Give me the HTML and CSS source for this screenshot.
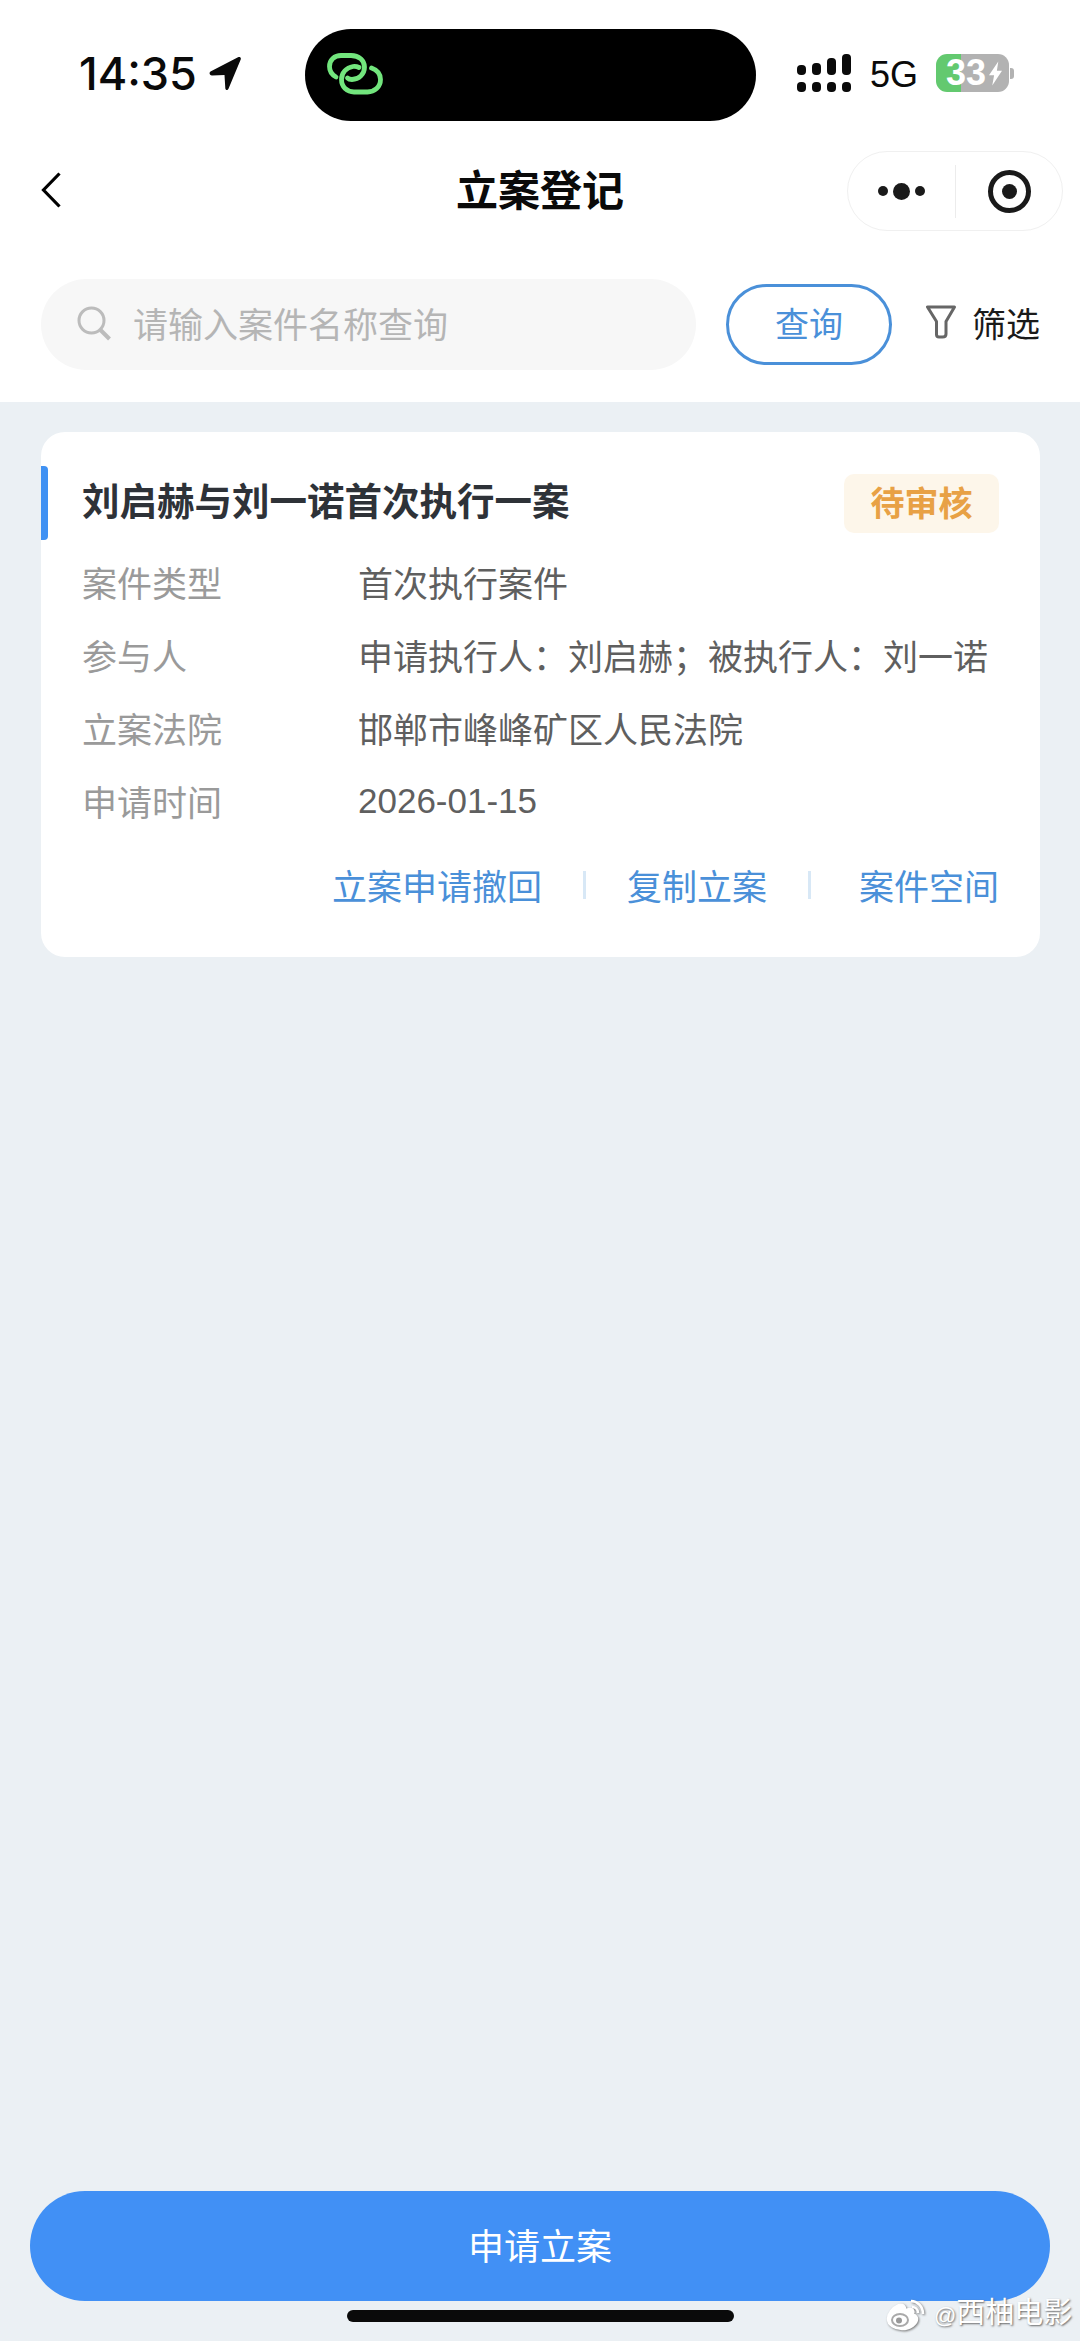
FILE: index.html
```html
<!DOCTYPE html>
<html lang="zh-CN">
<head>
    <meta charset="UTF-8">
    <meta name="viewport" content="width=device-width, initial-scale=1.0">
    <title>立案登记</title>
    <link rel="stylesheet" href="styles.css">
</head>
<body>
    <div class="page">
        <header class="top">
            <div class="status-bar">
                <div class="status-left">
                    <span class="clock">14:35</span>
                    <svg class="location" viewBox="0 0 34 35"><path d="M1.500 15.500 29 1.300c2-1 3.500.5 2.600 2.500L19.500 32.700c-1 2-3 1.500-3.200-.5L15.500 19 3 19.500c-2.500 0-3.200-2.800-1.500-4z"/></svg>
                </div>
                <div class="island">
                    <svg class="island-logo" viewBox="0 0 56 42" fill="none" stroke="#72e57d" stroke-width="4.800" stroke-linecap="round">
                        <path d="M9 24C4.500 21.500 2.500 17 2.500 13.500 2.500 7 7.500 2.500 14 2.500h10c8 0 13.500 5 13.500 11.500 0 7-5.500 12.500-12.500 12.500-2 0-3.500-.5-4.500-1.500"/>
                        <path d="M44.500 15c5.500 2 9 6 9 11.500 0 7.500-6 12.500-13 12.500H27c-7 0-12.500-5-12.500-12.500 0-7 5-12 11.500-13 2-.3 4 0 6 1"/>
                    </svg>
                </div>
                <div class="status-right">
                    <div class="signal">
                        <div class="signal-col"><span class="bar b1"></span><span class="bar-dot"></span></div>
                        <div class="signal-col"><span class="bar b2"></span><span class="bar-dot"></span></div>
                        <div class="signal-col"><span class="bar b3"></span><span class="bar-dot"></span></div>
                        <div class="signal-col"><span class="bar b4"></span><span class="bar-dot"></span></div>
                    </div>
                    <span class="network">5G</span>
                    <div class="battery">
                        <div class="battery-body"><span class="battery-text">33</span><svg class="bolt" viewBox="0 0 14 26"><path d="M10 0 0 15h5.500L3.500 26 14 10H8.500z"/></svg></div>
                        <span class="battery-nub"></span>
                    </div>
                </div>
            </div>

            <nav class="nav-bar">
                <svg class="back" viewBox="0 0 20 36" fill="none" stroke="#000" stroke-width="3.200"><path d="M18.500 1.500 2.500 18l16 16.500"/></svg>
                <h1 class="nav-title">立案登记</h1>
                <div class="capsule">
                    <div class="capsule-dots">
                        <span class="dot"></span>
                        <span class="dot big"></span>
                        <span class="dot"></span>
                    </div>
                    <span class="capsule-line"></span>
                    <div class="capsule-record"><span></span></div>
                </div>
            </nav>

            <div class="search-row">
                <div class="search-box">
                    <svg class="search-icon" viewBox="0 0 34 35" fill="none" stroke="#bcbcbc" stroke-width="3"><circle cx="14.500" cy="14.500" r="12.500"/><path d="m23.500 24 9 9" stroke-width="4"/></svg>
                    <span class="placeholder">请输入案件名称查询</span>
                </div>
                <button class="query-btn">查询</button>
                <div class="filter">
                    <svg class="filter-icon" viewBox="0 0 30 34" fill="none" stroke="#666" stroke-width="3" stroke-linejoin="round"><path d="M1.500 2h27L20 16.500V29c0 2-1.500 3-3.500 3H13c-1.500 0-2.500-1-2.500-2.500V16.500z"/></svg>
                    <span class="filter-text">筛选</span>
                </div>
            </div>
        </header>

        <main class="list">
            <section class="case-card">
                <div class="case-head">
                    <h2 class="case-title">刘启赫与刘一诺首次执行一案</h2>
                    <span class="case-status">待审核</span>
                </div>
                <div class="case-row"><span class="case-label">案件类型</span><span class="case-value">首次执行案件</span></div>
                <div class="case-row"><span class="case-label">参与人</span><span class="case-value">申请执行人：刘启赫；被执行人：刘一诺</span></div>
                <div class="case-row"><span class="case-label">立案法院</span><span class="case-value">邯郸市峰峰矿区人民法院</span></div>
                <div class="case-row"><span class="case-label">申请时间</span><span class="case-value">2026-01-15</span></div>
                <div class="case-actions">
                    <a>立案申请撤回</a>
                    <span class="action-line"></span>
                    <a>复制立案</a>
                    <span class="action-line"></span>
                    <a class="last">案件空间</a>
                </div>
            </section>
        </main>

        <footer class="bottom">
            <button class="apply-btn">申请立案</button>
            <div class="home-bar"></div>
        </footer>

        <div class="watermark">
            <svg class="weibo" viewBox="0 0 42 32" fill="none" stroke="#fff" stroke-width="2.500"><path fill="#fff" d="M14 6C7 9 3 15 3 20c0 6 7 10 14 10 8 0 15-5 15-10 0-3-2-4-4-5 1-3 0-5-3-5-2 0-4 1-5 1 .5-4-2-6-6-5z"/><ellipse cx="15" cy="21" rx="8" ry="6" stroke="#aaa" stroke-width="2"/><circle cx="14" cy="21.500" r="3" fill="#999" stroke="none"/><path d="M26 2c6 0 12 5 12 13M27 8c3 0 6 2 6 6"/></svg>
            <span class="watermark-text"><span class="at">@</span>西柚电影</span>
        </div>
    </div>
</body>
</html>
```

FILE: styles.css
```css
* {
    box-sizing: border-box;
}
html, body {
    margin: 0;
    padding: 0;
}
body {
    font-family: "Liberation Sans", "Noto Sans CJK SC", sans-serif;
    background-color: #ebf0f4;
}
h1, h2 {
    margin: 0;
}
button {
    font-family: inherit;
    cursor: pointer;
}

.page {
    position: relative;
    width: 1080px;
    height: 2341px;
    display: flex;
    flex-direction: column;
    overflow: hidden;
}

/* top white area */
.top {
    height: 402px;
    background: #fff;
    display: flex;
    flex-direction: column;
}
.status-bar {
    height: 121px;
    padding-top: 29px;
    display: flex;
    align-items: flex-start;
}
.status-left {
    width: 305px;
    height: 92px;
    padding: 0 0 3px 79px;
    display: flex;
    align-items: center;
    gap: 12px;
}
.clock {
    font-family: Inter, sans-serif;
    font-size: 45px;
    font-weight: 550;
    color: #0a0a0a;
}
.location {
    width: 34px;
    height: 35px;
    fill: #0a0a0a;
}
.island {
    width: 451px;
    height: 92px;
    background: #000;
    border-radius: 46px;
    padding-left: 22px;
    display: flex;
    align-items: center;
}
.island-logo {
    width: 56px;
    height: 42px;
    margin-bottom: 2px;
}
.status-right {
    flex: 1;
    height: 92px;
    padding-left: 41px;
    display: flex;
    align-items: center;
}
.signal {
    display: flex;
    gap: 6px;
    height: 38px;
    margin-top: -4px;
}
.signal-col {
    width: 9px;
    height: 38px;
    display: flex;
    flex-direction: column;
    justify-content: flex-end;
    gap: 7px;
}
.bar {
    display: block;
    background: #0a0a0a;
    border-radius: 4px;
}
.bar-dot {
    display: block;
    height: 10px;
    background: #0a0a0a;
    border-radius: 4px;
}
.b1 {
    height: 10px;
}
.b2 {
    height: 12px;
}
.b3 {
    height: 17px;
}
.b4 {
    height: 21px;
}
.network {
    margin-left: 19px;
    font-size: 36px;
    color: #0a0a0a;
    line-height: 1;
}
.battery {
    margin: -4px 0 0 18px;
    display: flex;
    align-items: center;
}
.battery-body {
    width: 73px;
    height: 38px;
    border-radius: 11px;
    background: linear-gradient(to right, #63c96f 0, #63c96f 34%, #b2b2b2 34%);
    display: flex;
    align-items: center;
    padding-left: 10px;
    gap: 3px;
}
.battery-text {
    font-size: 36px;
    font-weight: 700;
    color: #fff;
    line-height: 1;
}
.bolt {
    width: 13px;
    height: 25px;
    fill: #fff;
}
.battery-nub {
    width: 4px;
    height: 11px;
    margin-left: 1px;
    background: #b2b2b2;
    border-radius: 0 3px 3px 0;
}

.nav-bar {
    height: 110px;
    padding: 30px 17px 0;
    display: grid;
    grid-template-columns: 1fr auto 1fr;
    align-items: center;
}
.back {
    width: 20px;
    height: 36px;
    margin: 0 0 2px 24px;
}
.nav-title {
    font-size: 42px;
    font-weight: 700;
    color: #0a0a0a;
    padding-bottom: 7px;
}
.capsule {
    width: 216px;
    height: 80px;
    justify-self: end;
    border: 1px solid #f0f0f0;
    border-radius: 40px;
    display: flex;
    align-items: center;
}
.capsule-dots {
    width: 107px;
    display: flex;
    justify-content: center;
    align-items: center;
    gap: 5px;
}
.dot {
    width: 10px;
    height: 10px;
    border-radius: 50%;
    background: #1a1a1a;
}
.dot.big {
    width: 17px;
    height: 17px;
}
.capsule-line {
    width: 1px;
    height: 53px;
    background: #ececec;
}
.capsule-record {
    flex: 1;
    display: flex;
    justify-content: center;
}
.capsule-record span {
    width: 43px;
    height: 43px;
    border: 5px solid #1a1a1a;
    border-radius: 50%;
    display: flex;
    align-items: center;
    justify-content: center;
}
.capsule-record span::after {
    content: "";
    width: 15px;
    height: 15px;
    border-radius: 50%;
    background: #1a1a1a;
}

.search-row {
    display: flex;
    align-items: center;
    padding: 0 0 0 41px;
    margin-top: 48px;
}
.search-box {
    width: 655px;
    height: 91px;
    border-radius: 46px;
    background: #f7f7f7;
    display: flex;
    align-items: center;
    padding-left: 36px;
    gap: 22px;
}
.search-icon {
    width: 34px;
    height: 35px;
    margin-bottom: 2px;
}
.placeholder {
    font-size: 35px;
    color: #b5b5b5;
    padding-bottom: 4px;
}
.query-btn {
    width: 166px;
    height: 81px;
    margin-left: 30px;
    padding: 0 0 4px;
    border: 3px solid #4a90d9;
    border-radius: 41px;
    background: #fff;
    color: #4a90d9;
    font-size: 34px;
}
.filter {
    margin-left: 34px;
    display: flex;
    align-items: center;
    gap: 16px;
    font-size: 34px;
    color: #1a1a1a;
}
.filter-icon {
    width: 30px;
    height: 34px;
    margin-bottom: 5px;
}
.filter-text {
    padding-bottom: 4px;
}

/* case list */
.list {
    flex: 1;
    padding: 30px 40px 0 41px;
}
.case-card {
    position: relative;
    height: 525px;
    padding: 36px 41px 0;
    background: #fff;
    border-radius: 24px;
}
.case-card::before {
    content: "";
    position: absolute;
    left: 0;
    top: 34px;
    width: 7px;
    height: 74px;
    background: #3f91f3;
    border-radius: 0 4px 4px 0;
}
.case-head {
    height: 70px;
    margin-bottom: 7px;
    display: flex;
    justify-content: space-between;
    align-items: center;
}
.case-title {
    font-size: 37.500px;
    font-weight: 700;
    color: #2e3238;
    padding-bottom: 10px;
}
.case-status {
    width: 155px;
    height: 59px;
    padding-bottom: 3px;
    background: #fdf6ea;
    border-radius: 10px;
    color: #e8a145;
    font-size: 34px;
    font-weight: 700;
    display: flex;
    align-items: center;
    justify-content: center;
}
.case-row {
    height: 73px;
    display: flex;
    align-items: center;
    font-size: 35px;
}
.case-label {
    width: 276px;
    color: #9a9a9a;
}
.case-value {
    color: #5f5f5f;
}
.case-actions {
    margin-top: 22px;
    display: flex;
    justify-content: flex-end;
    align-items: center;
    gap: 41px;
    font-size: 35px;
    color: #4a90d9;
}
.case-actions .last {
    margin-left: 7px;
}
.action-line {
    width: 3px;
    height: 28px;
    background: #d8e8f6;
}

/* bottom */
.bottom {
    height: 150px;
    padding: 0 30px;
    display: flex;
    flex-direction: column;
    align-items: center;
}
.apply-btn {
    width: 100%;
    height: 110px;
    padding: 0 0 5px;
    border: none;
    border-radius: 55px;
    background: #4190f5;
    color: #fff;
    font-size: 36px;
}
.home-bar {
    width: 387px;
    height: 12px;
    margin-top: 9px;
    background: #0a0a0a;
    border-radius: 6px;
}
.watermark {
    position: absolute;
    left: 885px;
    top: 2297px;
    display: flex;
    align-items: center;
    gap: 7px;
}
.weibo {
    width: 42px;
    height: 32px;
    filter: drop-shadow(1px 1px 1px #777);
}
.watermark-text {
    font-size: 29px;
    line-height: 32px;
    color: #fff;
    white-space: nowrap;
    text-shadow: 1px 1px 2px #666;
}
.at {
    font-size: 22px;
}
```
